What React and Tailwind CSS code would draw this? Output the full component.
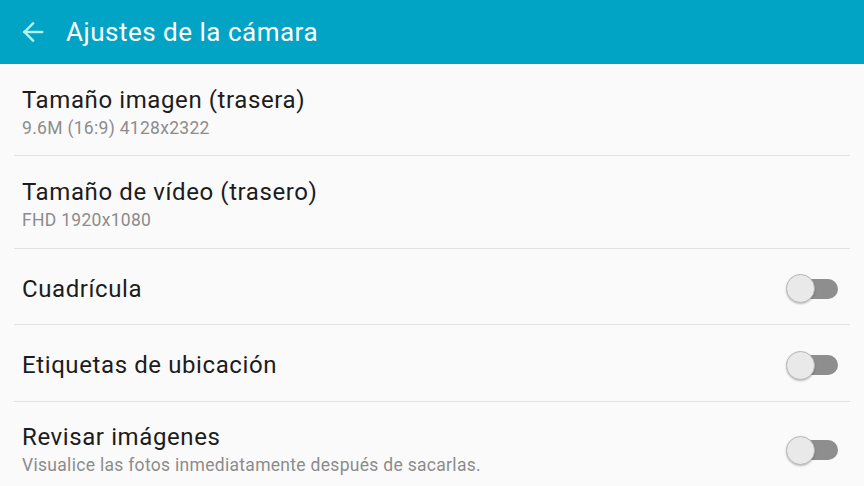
import React from "react";

function Toggle() {
  return (
    <div className="relative w-[52px] h-[32px] mr-[12px] flex items-center">
      <div className="absolute right-0 w-[40px] h-[20px] rounded-full bg-[#8e8e8e]" />
      <div className="absolute left-0 w-[29px] h-[29px] rounded-full bg-[#e9e9e9] border border-[#b8b8b8] shadow-[0_1px_2px_rgba(0,0,0,0.25)]" />
    </div>
  );
}

function Title({ children }) {
  return <div className="text-[24px] leading-[30px] tracking-[0.6px] text-[#1c1c1c]">{children}</div>;
}

function Sub({ children }) {
  return <div className="text-[17.5px] leading-[26px] tracking-[0.3px] text-[#8c8c8c]">{children}</div>;
}

export default function App() {
  return (
    <div className="w-[864px] h-[486px] overflow-hidden bg-[#fafafa]" style={{ fontFamily: "Roboto, 'Noto Sans', sans-serif" }}>
      <div className="h-[64px] bg-[#02a4c6] flex items-center">
        <svg className="ml-[22px]" width="22" height="22" viewBox="0 0 22 22" fill="none" stroke="#b3f3f2" strokeWidth="2.4" strokeLinecap="square">
          <path d="M2.5 11H20" />
          <path d="M11 2.5L2.5 11L11 19.5" />
        </svg>
        <div className="ml-[22px] text-[26px] tracking-[0.5px] text-white leading-none">Ajustes de la cámara</div>
      </div>
      <div className="mx-[14px]">
        <div className="flex flex-col pl-[8px] pt-[21px] h-[92px] border-b border-[#e2e2e2]">
          <Title>Tamaño imagen (trasera)</Title>
          <Sub>9.6M (16:9) 4128x2322</Sub>
        </div>
        <div className="flex flex-col pl-[8px] pt-[21px] h-[93px] border-b border-[#e2e2e2]">
          <Title>Tamaño de vídeo (trasero)</Title>
          <Sub>FHD 1920x1080</Sub>
        </div>
        <div className="flex items-center justify-between pl-[8px] pt-[4px] h-[76px] border-b border-[#e2e2e2]">
          <Title>Cuadrícula</Title>
          <Toggle />
        </div>
        <div className="flex items-center justify-between pl-[8px] pt-[4px] h-[77px] border-b border-[#e2e2e2]">
          <Title>Etiquetas de ubicación</Title>
          <Toggle />
        </div>
        <div className="flex items-start justify-between pl-[8px] pt-[20px] h-[90px]">
          <div className="flex flex-col">
            <Title>Revisar imágenes</Title>
            <Sub>Visualice las fotos inmediatamente después de sacarlas.</Sub>
          </div>
          <div className="mt-[12px]"><Toggle /></div>
        </div>
      </div>
    </div>
  );
}
